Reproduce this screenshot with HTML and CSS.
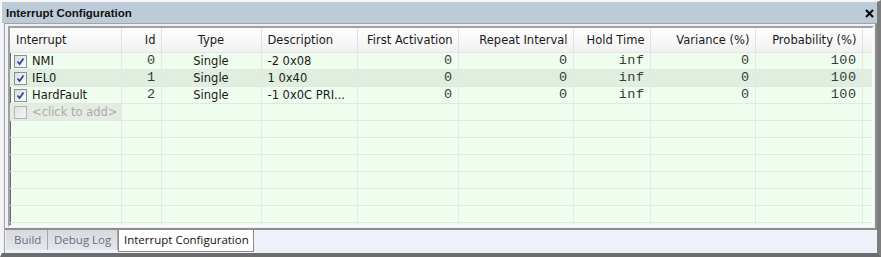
FILE: index.html
```html
<!DOCTYPE html>
<html>
<head>
<meta charset="utf-8">
<link rel="stylesheet" href="styles.css">
</head>
<body>
<div class="window">
  <div class="titlebar">
    <span class="title">Interrupt Configuration</span>
    <svg class="close" width="9" height="9" viewBox="0 0 9 9"><path d="M1 1L8 8M8 1L1 8" stroke="#000" stroke-width="2" fill="none"/></svg>
  </div>
  <div class="frame">
    <div class="panel">
      <div class="grid">
        <table>
          <colgroup>
            <col class="c1"><col class="c2"><col class="c3"><col class="c4"><col class="c5"><col class="c6"><col class="c7"><col class="c8"><col class="c9"><col class="c10">
          </colgroup>
          <thead>
            <tr>
              <th class="l">Interrupt</th>
              <th class="r">Id</th>
              <th class="c">Type</th>
              <th class="l">Description</th>
              <th class="r">First Activation</th>
              <th class="r">Repeat Interval</th>
              <th class="r">Hold Time</th>
              <th class="r">Variance (%)</th>
              <th class="r">Probability (%)</th>
              <th></th>
            </tr>
          </thead>
          <tbody>
            <tr>
              <td class="name"><span class="cb on"><svg width="9" height="9" viewBox="0 0 9 9"><path d="M1.5 4.5L3.6 7L7.5 1.5" stroke="#2a4a9e" stroke-width="1.8" fill="none"/></svg></span>NMI</td>
              <td class="m">0</td><td class="c">Single</td><td class="l">-2 0x08</td><td class="m">0</td><td class="m">0</td><td class="m">inf</td><td class="m">0</td><td class="m">100</td><td></td>
            </tr>
            <tr class="sel">
              <td class="name"><span class="cb on"><svg width="9" height="9" viewBox="0 0 9 9"><path d="M1.5 4.5L3.6 7L7.5 1.5" stroke="#2a4a9e" stroke-width="1.8" fill="none"/></svg></span>IEL0</td>
              <td class="m">1</td><td class="c">Single</td><td class="l">1 0x40</td><td class="m">0</td><td class="m">0</td><td class="m">inf</td><td class="m">0</td><td class="m">100</td><td></td>
            </tr>
            <tr>
              <td class="name"><span class="cb on"><svg width="9" height="9" viewBox="0 0 9 9"><path d="M1.5 4.5L3.6 7L7.5 1.5" stroke="#2a4a9e" stroke-width="1.8" fill="none"/></svg></span>HardFault</td>
              <td class="m">2</td><td class="c">Single</td><td class="l">-1 0x0C PRI...</td><td class="m">0</td><td class="m">0</td><td class="m">inf</td><td class="m">0</td><td class="m">100</td><td></td>
            </tr>
            <tr>
              <td class="name add"><span class="cb off"></span>&lt;click to add&gt;</td>
              <td></td><td></td><td></td><td></td><td></td><td></td><td></td><td></td><td></td>
            </tr>
            <tr><td></td><td></td><td></td><td></td><td></td><td></td><td></td><td></td><td></td><td></td></tr>
            <tr><td></td><td></td><td></td><td></td><td></td><td></td><td></td><td></td><td></td><td></td></tr>
            <tr><td></td><td></td><td></td><td></td><td></td><td></td><td></td><td></td><td></td><td></td></tr>
            <tr><td></td><td></td><td></td><td></td><td></td><td></td><td></td><td></td><td></td><td></td></tr>
            <tr><td></td><td></td><td></td><td></td><td></td><td></td><td></td><td></td><td></td><td></td></tr>
            <tr><td></td><td></td><td></td><td></td><td></td><td></td><td></td><td></td><td></td><td></td></tr>
            <tr><td></td><td></td><td></td><td></td><td></td><td></td><td></td><td></td><td></td><td></td></tr>
          </tbody>
        </table>
      </div>
    </div>
    <div class="tabs">
      <div class="tab build">Build</div>
      <div class="tab debug">Debug Log</div>
      <div class="tab active">Interrupt Configuration</div>
    </div>
  </div>
</div>
</body>
</html>
```

FILE: styles.css
```css
* { box-sizing: border-box; }
html, body { margin: 0; padding: 0; }
body {
  width: 881px;
  height: 257px;
  overflow: hidden;
  font-family: "DejaVu Sans", "Liberation Sans", sans-serif;
  font-size: 11.5px;
  color: #1a1a1a;
}
.window {
  width: 881px;
  height: 257px;
  background: #eff1fa;
  border-top: 2px solid #f6f6f6;
  border-left: 2px solid #f6f6f6;
  border-right: 4px solid #7d7d7d;
  border-bottom: 4px solid #6c6c6c;
  display: flex;
  flex-direction: column;
}
.titlebar {
  height: 21px;
  flex: none;
  background: #bdcbd9;
  display: flex;
  align-items: center;
  justify-content: space-between;
  padding: 0 3px 0 4px;
}
.title {
  font-family: "Liberation Sans", Arial, sans-serif;
  font-weight: bold;
  font-size: 11.5px;
  color: #111;
}
.close { display: block; margin-top: 2px; }
.frame {
  flex: 1;
  margin-left: 2px;
  border-left: 1px solid #a6a6a6;
  display: flex;
  flex-direction: column;
}
.panel {
  flex: none;
  height: 207px;
  border-top: 1px solid #a3a3a3;
  border-right: 2px solid #8e8e8e;
  border-bottom: 2px solid #8e8e8e;
  padding: 2px 1px 1px 3px;
}
.grid {
  height: 201px;
  overflow: hidden;
  background: #effdef;
  border-top: 2px solid #a0a0a0;
  border-left: 2px solid #a0a0a0;
  border-right: 2px solid #fafafa;
  border-bottom: 2px solid #fafafa;
  box-shadow: inset 1px 1px 0 #6a6a6a;
}
table {
  border-collapse: collapse;
  table-layout: fixed;
  width: 862px;
}
col.c1 { width: 111px; }
col.c2 { width: 40px; }
col.c3 { width: 100px; }
col.c4 { width: 96px; }
col.c5 { width: 101px; }
col.c6 { width: 115px; }
col.c7 { width: 77px; }
col.c8 { width: 105px; }
col.c9 { width: 107px; }
col.c10 { width: 10px; }
th {
  height: 24px;
  font-weight: normal;
  background: linear-gradient(#fefefe, #f1f1f1);
  border-right: 1px solid #e1e1e1;
  border-bottom: 1px solid #e6e6e6;
  padding: 0 6px;
  white-space: nowrap;
  overflow: hidden;
  color: #1a1a1a;
}
th.r { padding-right: 5px; }
th:last-child { border-right: none; }
td {
  height: 17px;
  padding: 0 6px;
  border-right: 1px solid #e4e7e4;
  border-bottom: 1px solid #e4e7e4;
  white-space: nowrap;
  overflow: hidden;
  line-height: 16px;
}
.l { text-align: left; }
.r { text-align: right; }
.c { text-align: center; }
td.m {
  text-align: right;
  font-family: "Liberation Mono", monospace;
  font-size: 13.5px;
  color: #3a3a3a;
  letter-spacing: 0.5px;
  padding-right: 5px;
}
tr.sel td { background: #e0eee0; }
td.name { padding-left: 4px; }
td.name .cb {
  display: inline-block;
  vertical-align: -3px;
  width: 13px;
  height: 13px;
  margin-right: 5px;
  border: 1px solid #8c8f95;
  background: linear-gradient(135deg, #dcdcdc, #fdfdfd);
  position: relative;
}
td.name .cb svg { position: absolute; left: 1px; top: 1px; }
td.add { background: #e3ebe3; color: #a8ada8; }
td.name .cb.off { border-color: #b2b4b6; background: linear-gradient(135deg, #e2e2e2, #f4f4f4); }
.tabs {
  display: flex;
  height: 22px;
  padding-left: 1px;
  font-family: "Open Sans", "Liberation Sans", sans-serif;
  font-size: 11.5px;
}
.tab {
  flex: none;
  white-space: nowrap;
  height: 20px;
  line-height: 19px;
  border-right: 1px solid #a9a9a9;
  color: #6b6f78;
  background: linear-gradient(#d8dae0, #e5e7ee);
}
.tab.build { width: 42px; padding-left: 8px; }
.tab.debug { width: 70px; padding-left: 6px; }
.tab.active {
  height: 22px;
  width: 136px;
  padding-left: 5px;
  line-height: 20px;
  background: #ffffff;
  color: #111;
  border: 1px solid #8c8c8c;
  border-top: none;
}
```
